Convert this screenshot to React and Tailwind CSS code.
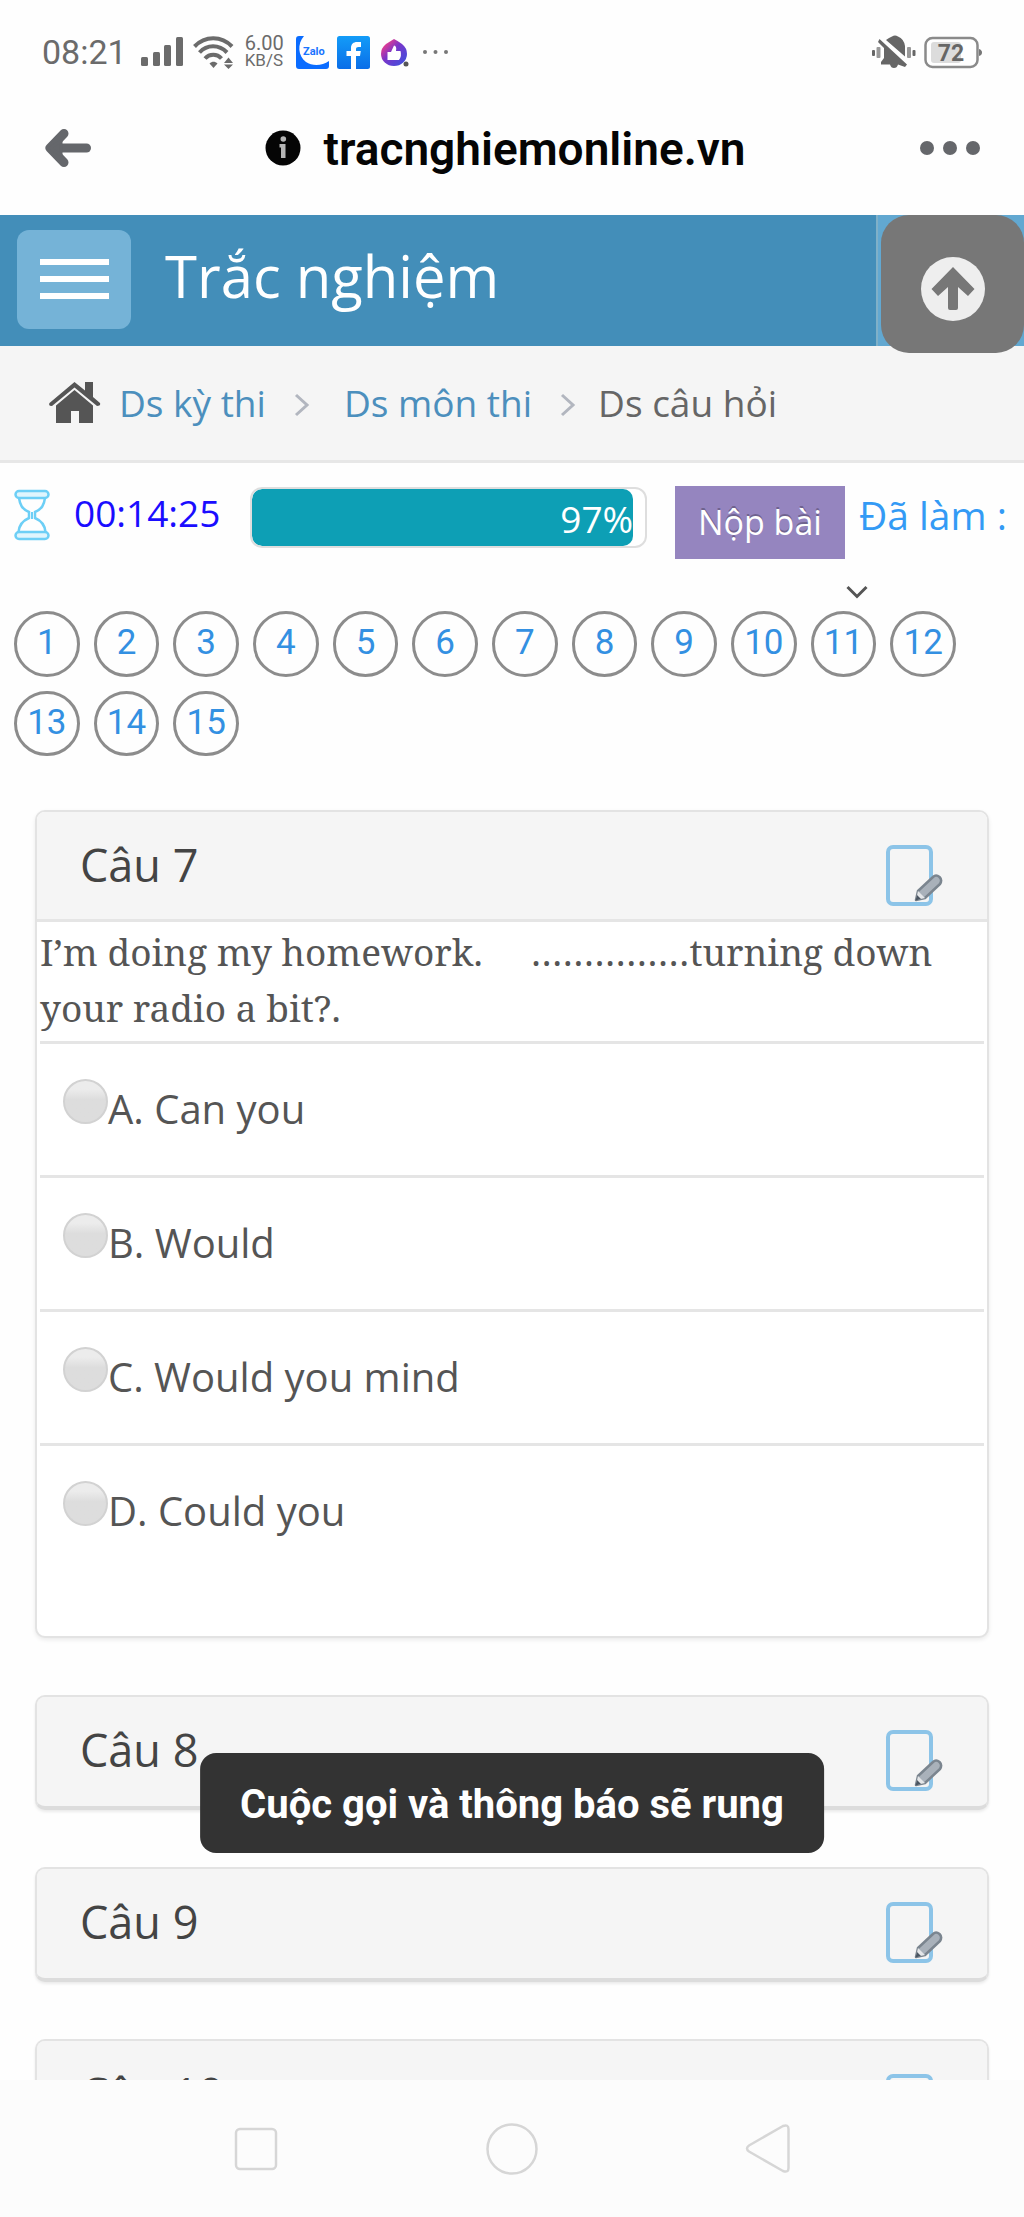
import React from "react";

const roboto = "font-[Roboto,sans-serif]";

function SignalIcon() {
  return (
    <svg width="42" height="30" viewBox="0 0 42 30" fill="#6b6b6b" aria-hidden="true">
      <rect x="0" y="20" width="7" height="9" rx="1.5" />
      <rect x="12" y="15" width="7" height="14" rx="1.5" />
      <rect x="23" y="8" width="7" height="21" rx="1.5" />
      <rect x="35" y="0" width="7" height="29" rx="1.5" />
    </svg>
  );
}

function WifiIcon() {
  return (
    <svg width="41" height="33" viewBox="0 0 41 33" fill="none" stroke="#6b6b6b" strokeWidth="4" aria-hidden="true">
      <path d="M1.5 10.5C12 -.5 28.500 -.5 39 10.500" />
      <path d="M6.500 16.500C14 8.300 26 8.300 34 16.500" />
      <path d="M12 22.500C16.500 17.500 24 17.500 28.500 22.500" />
      <path d="M16.500 27.500C19 25 22 25 24.500 27.500L20.500 32Z" fill="#6b6b6b" stroke="none" />
      <path d="M31 27L35.500 21.500L40 27ZM31 28.500L35.500 33L40 28.500Z" fill="#6b6b6b" stroke="none" />
    </svg>
  );
}

function ZaloIcon() {
  return (
    <svg width="33" height="33" viewBox="0 0 33 33" aria-hidden="true">
      <path d="M3 0H8C1 8 2 20 10 26C16 30 26 30 33 25V30Q33 33 30 33H3Q0 33 0 30V3Q0 0 3 0Z" fill="#0a6cff" />
      <text x="7" y="19" fontSize="11" fontWeight="700" fontFamily="Roboto, sans-serif" fill="#1a75ff">Zalo</text>
    </svg>
  );
}

function FacebookIcon() {
  return (
    <svg width="33" height="33" viewBox="0 0 33 33" aria-hidden="true">
      <rect width="33" height="33" rx="2.500" fill="url(#fbFill)" />
      <path d="M14 33V20H9.500V15H14V12C14 8 16.500 6 20 6H24V11H21.500C19.800 11 19 11.800 19 13.300V15H23.800L23 20H19V33Z" fill="#fff" />
      <defs>
        <linearGradient id="fbFill" x1="0" y1="0" x2="0" y2="1">
          <stop offset="0" stopColor="#139cf8" />
          <stop offset="1" stopColor="#0a6ee8" />
        </linearGradient>
      </defs>
    </svg>
  );
}

function LikeIcon() {
  return (
    <svg width="33" height="33" viewBox="0 0 33 33" aria-hidden="true">
      <path d="M16 3Q20 5 24 8Q29 12 29 18A13 12 0 0 1 3 18Q3 12 8 8Z" fill="url(#likeFill)" />
      <path d="M9.500 16H13L16 9.500Q19 10 18 15H22.500Q24 20 21 24H9.500Z" fill="#fff" />
      <circle cx="28" cy="28" r="2.500" fill="#555" />
      <defs>
        <linearGradient id="likeFill" x1="0" y1="0" x2="1" y2="1">
          <stop offset="0.100" stopColor="#ff3d83" />
          <stop offset="0.450" stopColor="#7a35c9" />
          <stop offset="1" stopColor="#3654e0" />
        </linearGradient>
      </defs>
    </svg>
  );
}

function Dots({ width, height, r, color }) {
  return (
    <svg width={width} height={height} viewBox={`0 0 ${width} ${height}`} fill={color} aria-hidden="true">
      <circle cx={r} cy={height / 2} r={r} />
      <circle cx={width / 2} cy={height / 2} r={r} />
      <circle cx={width - r} cy={height / 2} r={r} />
    </svg>
  );
}

function BellOffIcon() {
  return (
    <svg width="44" height="34" viewBox="0 0 44 34" fill="#666" aria-hidden="true">
      <path d="M14 5Q17 2.500 20 1.500Q23 -.5 26 1.500Q32 4 33 11V21.500Z" />
      <path d="M7.500 4L35 29.500L33 32L26 29.500Q25 33 22 33Q19 33 18 29.500H9V27L12 23V13L6 7Z" />
      <rect x="0" y="15" width="3" height="6" rx="1" />
      <rect x="4.500" y="12" width="4" height="11" rx="1" fill="#999" />
      <rect x="35" y="12" width="4" height="11" rx="1" fill="#999" />
      <rect x="40.500" y="15" width="3" height="6" rx="1" />
    </svg>
  );
}

function BatteryIcon() {
  return (
    <svg width="58" height="33" viewBox="0 0 58 33" aria-hidden="true">
      <rect x="1.500" y="2" width="52" height="29" rx="7" fill="#fff" stroke="#8a8a8a" strokeWidth="2.500" />
      <rect x="7" y="6" width="30" height="21" rx="3" fill="#dcdcdc" />
      <path d="M55 13Q58 14 58 16.500Q58 19 55 20Z" fill="#777" />
      <text x="27" y="25" textAnchor="middle" fontSize="23" fontWeight="700" fontFamily="Roboto, sans-serif" fill="#666">72</text>
    </svg>
  );
}

function StatusBar() {
  return (
    <div className={`flex h-[104px] shrink-0 items-center pl-[42px] pr-[42px] text-[#6b6b6b] ${roboto}`}>
      <span className="text-[34px] leading-[34px]">08:21</span>
      <div className="ml-[14px] flex items-center">
        <SignalIcon />
        <div className="ml-[10px]"><WifiIcon /></div>
        <div className="ml-[11px] flex flex-col">
          <span className="text-[20px] leading-[17px]">6.00</span>
          <span className="text-[17px] leading-[17px]">KB/S</span>
        </div>
      </div>
      <div className="ml-[12px] flex items-center gap-2">
        <ZaloIcon />
        <FacebookIcon />
        <LikeIcon />
        <div className="ml-1"><Dots width={25} height={6} r={2} color="#777" /></div>
      </div>
      <div className="ml-auto flex items-center gap-2">
        <BellOffIcon />
        <BatteryIcon />
      </div>
    </div>
  );
}

function BrowserBar() {
  return (
    <div className={`flex h-[111px] shrink-0 items-center justify-between pb-[23px] pl-[45px] pr-[44px] ${roboto}`}>
      <button type="button" aria-label="Back">
        <svg width="46" height="40" viewBox="0 0 46 40" fill="none" stroke="#65676b" strokeWidth="9" strokeLinecap="round" strokeLinejoin="round" aria-hidden="true">
          <path d="M41.500 20H8" />
          <path d="M19 5.500L5 20L19 34.500" />
          <path d="M5 20L16 13V27Z" strokeWidth="3" fill="#65676b" />
        </svg>
      </button>
      <div className="flex items-center gap-[22px]">
        <svg width="36" height="36" viewBox="0 0 36 36" aria-hidden="true">
          <circle cx="18" cy="18" r="17.500" fill="#050505" />
          <path d="M14.500 14H20.500V28H16V17.500H14.500Z" fill="#b5b5b5" />
          <circle cx="18.300" cy="9" r="2.800" fill="#b5b5b5" />
        </svg>
        <span className="pt-[2px] text-[46px] font-semibold leading-[56px] text-[#050505]">tracnghiemonline.vn</span>
      </div>
      <button type="button" aria-label="More options">
        <Dots width={60} height={14} r={7} color="#65676b" />
      </button>
    </div>
  );
}

function SiteHeader() {
  return (
    <header className="relative flex h-[131px] shrink-0 items-stretch bg-[#438eb9] pl-[17px]">
      <button type="button" aria-label="Menu" className="mt-[15px] flex h-[99px] w-[114px] flex-col items-center justify-center gap-[11px] rounded-[12px] bg-[#75b3d7] pb-[2px]">
        <span className="h-[6px] w-[69px] bg-white" />
        <span className="h-[6px] w-[69px] bg-white" />
        <span className="h-[6px] w-[69px] bg-white" />
      </button>
      <h1 className="ml-[34px] text-[58px] leading-[122px] text-white">Trắc nghiệm</h1>
      <div className="ml-auto w-[148px] border-l-2 border-[#7fb0c8] bg-[#62a8d1]" />
      <button type="button" aria-label="Scroll to top" className="absolute right-0 top-0 z-10 flex h-[138px] w-[143px] items-center justify-center rounded-[28px] bg-[#777777] pt-[10px]">
        <svg width="66" height="66" viewBox="-33 -33 66 66" aria-hidden="true">
          <circle r="32" fill="#eeeeee" />
          <path d="M0 -22L21.500 0L15 7L5 -2V19Q5 21 3 21H-3Q-5 21 -5 19V-2L-15 7L-21.500 0Z" fill="#777777" />
        </svg>
      </button>
    </header>
  );
}

function Separator() {
  return (
    <svg width="16" height="24" viewBox="0 0 16 24" fill="none" stroke="#b2b6bf" strokeWidth="3" className="mt-1" aria-hidden="true">
      <path d="M2 2L13 12L2 22" />
    </svg>
  );
}

function Breadcrumb() {
  return (
    <nav aria-label="Breadcrumb" className="flex h-[117px] shrink-0 items-center border-b-[3px] border-[#e7e7e7] bg-[#f5f5f5] pl-[49px] text-[37px] leading-[56px] text-[#4c8fbd]">
      <svg width="52" height="42" viewBox="0 0 52 42" fill="#555" aria-hidden="true">
        <path d="M25.500 0L36 8.500V0H44V15L51 21Q52 24 48 24L25.500 5.500L3 24Q-1 24 .5 21Z" />
        <path d="M25.500 8L44 23.500V41H30V29H22V41H7V23.500Z" />
      </svg>
      <a href="#exams" className="ml-[18px]">Ds kỳ thi</a>
      <span className="ml-[28px]"><Separator /></span>
      <a href="#subjects" className="ml-[34px]">Ds môn thi</a>
      <span className="ml-[28px]"><Separator /></span>
      <span className="ml-[22px] text-[#666]">Ds câu hỏi</span>
    </nav>
  );
}

function Hourglass() {
  return (
    <svg width="36" height="52" viewBox="0 0 36 52" fill="none" stroke="#6dcff6" strokeWidth="2.500" aria-hidden="true">
      <rect x="1.500" y="2" width="33" height="7" rx="3.500" fill="#dff5fd" />
      <rect x="1.500" y="43" width="33" height="7" rx="3.500" fill="#dff5fd" />
      <path d="M5 9C6 16 8 20 15 23V29C8 32 5 37 4.500 43M31 9C30 16 28 20 21 23V29C28 32 31 37 31.500 43" />
      <path d="M18 23V30" strokeWidth="2" />
    </svg>
  );
}

function TimerRow() {
  return (
    <section className="flex shrink-0 items-start pl-[14px] pr-[17px] pt-[23px] text-[37px]">
      <div className="mt-[3px]"><Hourglass /></div>
      <time className="ml-[24px] leading-[54px] text-[#1a0dff]">00:14:25</time>
      <div role="progressbar" aria-label="Thời gian" aria-valuenow={97} className="ml-[30px] mt-px h-[61px] flex-1 overflow-hidden rounded-[12px] border-2 border-[#dedede] bg-white">
        <div className="h-full rounded-[10px] bg-[#0d9fb5] text-right leading-[59px] text-white" style={{ width: "97%" }}>
          97%
        </div>
      </div>
      <button type="button" className="ml-[28px] h-[73px] bg-[#9585bf] px-[23px] text-[34px] leading-[73px] text-white [text-shadow:0_-2px_0_rgba(0,0,0,0.25)]">Nộp bài</button>
      <span className="ml-[14px] text-[39px] leading-[58px] text-[#339af5]">Đã làm :</span>
    </section>
  );
}

function QuestionNumbers() {
  return (
    <section className="shrink-0">
      <div className="flex h-[52px] justify-end pr-[156px] pt-[26px]">
        <button type="button" aria-label="Thu gọn" className="h-[14px]">
          <svg width="22" height="14" viewBox="0 0 22 14" fill="none" stroke="#555" strokeWidth="3" aria-hidden="true">
            <path d="M1.500 2L11 11.500L20.500 2" />
          </svg>
        </button>
      </div>
      <div className={`grid grid-cols-12 gap-[14px] pl-[14px] pr-[68px] text-[35px] text-[#3390e2] ${roboto}`}>
        {Array.from({ length: 15 }, (_, i) => (
          <a key={i} href={`#cau-${i + 1}`} className="flex aspect-square items-center justify-center rounded-full border-[3px] border-[#8c8c8c] pb-[2px] leading-[40px]">
            {i + 1}
          </a>
        ))}
      </div>
    </section>
  );
}

function NoteIcon() {
  return (
    <svg width="57" height="62" viewBox="0 0 57 62" aria-hidden="true">
      <rect x="2" y="2" width="43" height="57" rx="5" fill="none" stroke="#8cc4e8" strokeWidth="4" />
      <path d="M30 55L32 46L47 32Q50 29 53.500 32Q56.500 35 54 39L39 53Z" fill="#a9b1ba" stroke="#7b858f" strokeWidth="2.500" strokeLinejoin="round" />
      <path d="M32 46L39 53L30 55Z" fill="#e4e6e8" />
      <path d="M31 50L35 54L29.500 55.500Z" fill="#4a5561" />
    </svg>
  );
}

function CardHeader({ n }) {
  return (
    <div className="flex items-start justify-between bg-[#f5f5f5] pb-[2px] pl-[43px] pr-[44px]">
      <h2 className="text-[45px] leading-[105px] text-[#444]">Câu {n}</h2>
      <button type="button" aria-label={`Ghi chú câu ${n}`} className="mt-[33px]">
        <NoteIcon />
      </button>
    </div>
  );
}

const answers = ["A. Can you", "B. Would", "C. Would you mind", "D. Could you"];

function OpenQuestion() {
  return (
    <article id="cau-7" className="overflow-hidden rounded-[10px] border-2 border-[#e3e3e3] bg-white shadow-[0_2px_4px_rgba(0,0,0,0.08)]">
      <div className="border-b-[3px] border-[#e5e5e5]">
        <CardHeader n={7} />
      </div>
      <div className="px-[3px] pb-[59px]">
        <p className="pb-[5px] pt-[2px] font-['Noto_Serif','DejaVu_Serif',serif] text-[37px] leading-[56px] text-[#555]">
          I’m doing my homework.{"\u00a0\u00a0\u00a0\u00a0 "}……………turning down your radio a bit?.
        </p>
        {answers.map((a) => (
          <label key={a} className="flex h-[134px] items-start border-t-[3px] border-[#e5e5e5] pl-[23px] pt-[35px] text-[40px] leading-[60px] text-[#555]">
            <input type="radio" name="cau7" className="size-[45px] shrink-0 appearance-none rounded-full border-2 border-[#d2d2d2] bg-linear-to-b from-[#ececec] from-20% to-[#dddddd] to-45%" />
            <span>{a}</span>
          </label>
        ))}
      </div>
    </article>
  );
}

function ClosedQuestion({ n }) {
  return (
    <article id={`cau-${n}`} className="overflow-hidden rounded-[10px] border-2 border-b-4 border-[#e3e3e3] border-b-[#dcdcdc] bg-[#f5f5f5] pb-[2px] shadow-[0_2px_3px_rgba(0,0,0,0.08)]">
      <CardHeader n={n} />
    </article>
  );
}

function SystemNav() {
  const stroke = { fill: "none", stroke: "#d6d6d6", strokeWidth: 2.5, strokeLinejoin: "round" };
  return (
    <footer className="flex h-[137px] shrink-0 items-center bg-[#fcfcfc] px-[12.5%]">
      <button type="button" aria-label="Recent apps" className="flex flex-1 justify-center">
        <svg width="52" height="52" viewBox="0 0 52 52" {...stroke}><rect x="6" y="6" width="40" height="40" rx="4" /></svg>
      </button>
      <button type="button" aria-label="Home" className="flex flex-1 justify-center">
        <svg width="52" height="52" viewBox="0 0 52 52" {...stroke}><circle cx="26" cy="26" r="24.500" /></svg>
      </button>
      <button type="button" aria-label="Back" className="flex flex-1 justify-center">
        <svg width="52" height="52" viewBox="0 0 52 52" {...stroke}><path d="M41 3Q46.500 1 46.500 6V45Q46.500 50 41 48L7 28.500Q3 25.500 7 22.500Z" /></svg>
      </button>
    </footer>
  );
}

export default function App() {
  return (
    <div className="relative flex h-screen flex-col overflow-hidden bg-[#fefefe] font-['Open_Sans','Noto_Sans',sans-serif]">
      <StatusBar />
      <BrowserBar />
      <main className="flex min-h-0 flex-1 flex-col overflow-hidden">
        <SiteHeader />
        <Breadcrumb />
        <TimerRow />
        <QuestionNumbers />
        <div className="flex shrink-0 flex-col gap-[57px] px-[35px] pt-[54px]">
          <OpenQuestion />
          <ClosedQuestion n={8} />
          <ClosedQuestion n={9} />
          <ClosedQuestion n={10} />
        </div>
      </main>
      <SystemNav />
      <div role="status" className={`absolute bottom-[364px] left-1/2 -translate-x-1/2 whitespace-nowrap rounded-[16px] bg-[#333] px-[40px] pt-1 text-[40px] font-bold leading-[96px] text-white ${roboto}`}>
        Cuộc gọi và thông báo sẽ rung
      </div>
    </div>
  );
}
